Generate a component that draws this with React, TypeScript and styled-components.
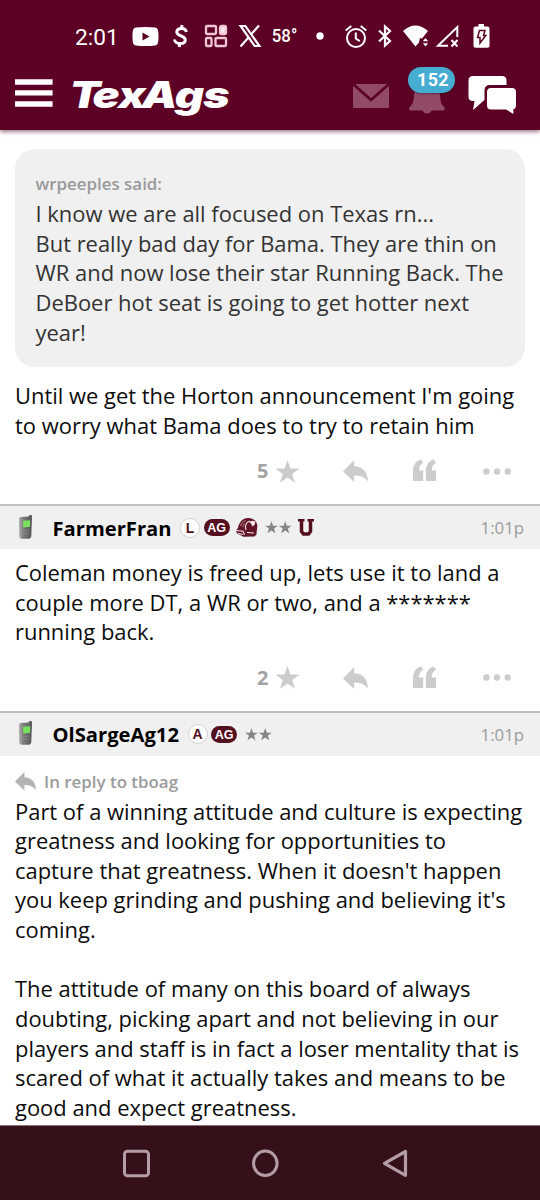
import React from "react";
import styled, { createGlobalStyle } from "styled-components";

const GlobalStyle = createGlobalStyle`
  * { box-sizing: border-box; }
  body { margin: 0; background: #fff; }
`;

const Screen = styled.div`
  display: flex;
  flex-direction: column;
  width: 540px;
  height: 1200px;
  overflow: hidden;
  background: #fff;
  color: #0c0c0c;
  font-family: "Open Sans", sans-serif;
`;

const TopBar = styled.header`
  flex: 0 0 130px;
  height: 130px;
  z-index: 1;
  background: #5c0025;
  color: #fff;
  box-shadow: 0 2px 4px rgba(70, 0, 30, 0.5);
`;

const StatusBar = styled.div`
  display: flex;
  align-items: center;
  height: 64px;
  padding: 8px 0 0 75px;
  font-family: Roboto, sans-serif;
`;

const Clock = styled.span`
  width: 57px;
  padding-top: 3px;
  font-size: 22.7px;
  line-height: 28px;
`;

const Icon = styled.svg<{ $ml?: number }>`
  display: block;
  flex: none;
  overflow: visible;
  margin-left: ${(p) => p.$ml ?? 0}px;
`;

const AppBar = styled.div`
  display: flex;
  align-items: flex-start;
  height: 66px;
  padding: 11px 0 0 15px;
`;

const BellWrap = styled.div`
  position: relative;
  margin: 5px 0 0 20px;
`;

const Count = styled.span`
  position: absolute;
  left: -1px;
  top: -13px;
  width: 47px;
  height: 26px;
  border-radius: 13px;
  background: #46acd2;
  box-shadow: 0 1px 2px rgba(30, 0, 20, 0.4);
  padding-left: 3px;
  color: #fff;
  font: 700 18px/26px Roboto, sans-serif;
  letter-spacing: 0.3px;
  text-align: center;
`;

const Feed = styled.main`
  flex: 1;
  min-height: 0;
  overflow: hidden;
`;

const Quote = styled.blockquote`
  margin: 19px 15px 14px;
  height: 218px;
  padding: 20px 20px 0 20.5px;
  border-radius: 20px;
  background: #f0f0f0;
  color: #333;
`;

const QuoteAuthor = styled.div`
  color: #999;
  font-size: 16.9px;
  font-weight: 600;
  line-height: 29px;
  padding-bottom: 1px;
`;

const Text = styled.p<{ $indent?: number }>`
  margin: 0;
  padding-left: ${(p) => p.$indent ?? 0}px;
  font-size: 21.94px;
  line-height: 29.65px;
  white-space: nowrap;
`;

const Line = styled.span`
  display: block;
  min-height: 29.65px;
`;

const Post = styled.article<{ $h?: number }>`
  display: flex;
  flex-direction: column;
  height: ${(p) => (p.$h ? `${p.$h}px` : "auto")};
`;

const Actions = styled.div`
  display: flex;
  align-items: center;
  height: 24px;
  margin-top: auto;
  margin-bottom: 21px;
  padding-left: 257px;
  color: #ccc;
`;

const Votes = styled.span`
  width: 18px;
  color: #a3a3a3;
  font-size: 20px;
  font-weight: 700;
  line-height: 24px;
`;

const PostHeader = styled.div`
  display: flex;
  flex: none;
  align-items: center;
  height: 45px;
  margin-bottom: 9px;
  padding: 0 16px 0 18px;
  border-top: 2px solid #c0c0c0;
  background: #f0f0f0;
`;

const Name = styled.span<{ $w: number }>`
  width: ${(p) => p.$w}px;
  margin-left: 18.5px;
  color: #000;
  font-size: 20.2px;
  font-weight: 700;
  white-space: nowrap;
`;

const LetterBadge = styled.span`
  width: 20px;
  height: 20px;
  border: 1px solid #d2d2d2;
  border-radius: 50%;
  background: #fff;
  color: #501020;
  font: 700 14px/19px "Liberation Sans", sans-serif;
  text-align: center;
`;

const AgBadge = styled.span`
  width: 26px;
  height: 17px;
  margin-left: 3.5px;
  border-radius: 9px;
  background: #54101f;
  color: #fff;
  font: 700 12.5px/18px "Liberation Sans", sans-serif;
  text-align: center;
`;

const Time = styled.time`
  margin-left: auto;
  color: #9b9b9b;
  font-size: 16.8px;
`;

const ReplyTo = styled.div`
  display: flex;
  align-items: center;
  height: 26px;
  margin: 4px 0 2px;
  padding-left: 15px;
  color: #9b9b9b;
  font-size: 16.9px;
  font-weight: 600;
  gap: 8px;
`;

const NavBar = styled.nav`
  display: flex;
  flex: 0 0 75px;
  height: 75px;
  padding: 24px 0 0 123px;
  border-top: 1px solid #8a7276;
  background: #361018;
`;

const Reply = ({ w, ml, color = "#ccc" }: { w: number; ml?: number; color?: string }) => (
  <Icon $ml={ml} width={w} height={(w * 22) / 25} viewBox="0 0 25 22">
    <path fill={color} d="M0 11.4L11.2 0v6.2C19.4 6.4 24.6 11.6 25 21.3 21.4 17.1 17 15.4 11.2 15.6V22z" />
  </Icon>
);

const STAR = "M12 0l2.9 8.6H24l-7.3 5.4 2.8 8.7L12 17.4l-7.5 5.3L7.3 14 0 8.6h9.1z";

const ActionRow = ({ votes }: { votes: number }) => (
  <Actions>
    <Votes>{votes}</Votes>
    <Icon width="25" height="23" viewBox="0 0 24 23"><path fill="currentColor" d={STAR} /></Icon>
    <Reply w={25} ml={43} />
    <Icon $ml={45} width="23" height="22" viewBox="0 0 23 22">
      <path
        fill="currentColor"
        d="M0 21V11.500C0 5 3 .7 8.200-.5l1.900 3.600C7.400 4.200 6.100 6.500 6 10.500h4.200V21zM12.800 21V11.500C12.800 5 15.800.7 21-.5l1.900 3.600c-2.700 1.100-4 3.400-4.100 7.400H23V21z"
      />
    </Icon>
    <Icon $ml={46.5} width="28" height="7" viewBox="0 0 28 7" fill="currentColor">
      <circle cx="3.4" cy="3.5" r="3.2" /><circle cx="14" cy="3.5" r="3.2" /><circle cx="24.7" cy="3.5" r="3.2" />
    </Icon>
  </Actions>
);

const Phone = () => (
  <Icon width="16" height="26" viewBox="0 0 16 26">
    <defs>
      <linearGradient id="phone" x1="0" x2="1" y1="0" y2="0">
        <stop offset="0" stopColor="#b0b0b0" /><stop offset=".35" stopColor="#7c7c7c" /><stop offset="1" stopColor="#565656" />
      </linearGradient>
    </defs>
    <path fill="url(#phone)" d="M2.5 2L10.500 1.500 11.500 0h2.200l.3 2-.7 19c0 1.600-1 2.500-2.500 2.700l-6 .1C2.800 23.800 1.200 23 1.200 21L1 4.500C1 3 1.500 2 2.500 2z" />
    <path fill="#79e25c" d="M5 5.800l7-.6v6.500l-6.700.8z" />
    <path stroke="#8f8f8f" strokeWidth="1" strokeDasharray="1.500 1.300" d="M5 15.500h6M5 18.500h6" />
  </Icon>
);

const Stars = ({ ml }: { ml: number }) => (
  <Icon $ml={ml} width="27" height="13" viewBox="0 0 54 26" fill="#858585">
    <path transform="scale(1.080)" d={STAR} /><path transform="translate(27.500) scale(1.080)" d={STAR} />
  </Icon>
);

const Helmet = () => (
  <Icon $ml={6} width="22" height="19" viewBox="0 0 22 19">
    <path fill="#611425" d="M2 10C3 4 7 0 12 0c5.500 0 9.300 3.500 9.300 8 0 3-.8 5-.8 8.500l-2 2-11 .2L1 15.500l-1-3z" />
    <path fill="none" stroke="#f5e9ec" strokeWidth="1.100" d="M0 12.500l7 .8 1.500 3.500M11 14.500l7 .5M2 15.500l5 1M10 12c-1.500-4 0-8 4-9" />
    <path fill="none" stroke="#c597a3" strokeWidth=".9" d="M4.500 8c1-3 2.500-4.500 5-5.500M7 9c.5-2 1-3 2-4" />
    <path fill="#f5e9ec" d="M13 4l3-1.200 3.500.7-1 3.500-2.500 1.500-.5-2.500z" />
  </Icon>
);

const BlockU = () => (
  <Icon $ml={6} width="16" height="17" viewBox="0 0 16 17">
    <path fill="none" stroke="#54101f" strokeWidth="3.500" d="M3.500 1v11.500l2 2.500h5l2-2.500V1" />
    <path stroke="#54101f" strokeWidth="2.500" d="M0 1.300h6.500M9.500 1.300H16" />
  </Icon>
);

const StatusIcons = () => (
  <>
    <Icon width="27" height="19" viewBox="0 0 27 19">
      <path fill="#fff" fillRule="evenodd" d="M4 .5Q13.500-.5 23 .5c2.700.3 3.500 2 3.500 9s-.8 8.700-3.500 9q-9.500 1-19 0C1.300 18.200.5 16.500.5 9.500S1.300.8 4 .5zM10.500 5.500v8l7-4z" />
    </Icon>
    <Icon $ml={13.5} width="15" height="22" viewBox="0 0 15 22" fill="none" stroke="#fff">
      <path strokeWidth="3" d="M13.300 7C13 4.500 11 3.500 8.500 3.500 5.500 3.500 3.800 5 3.800 7c0 4.800 8.500 3 8.500 8 0 2.200-2 3.500-5 3.500S1.700 17 1.500 14.500" />
      <path strokeWidth="3" d="M9 0l-.6 4M6.800 18l-.6 4" />
    </Icon>
    <Icon $ml={17} width="22" height="22" viewBox="0 0 22 22" fill="none" stroke="#f3c6d4" strokeWidth="2.300">
      <rect x="1" y="1" width="10" height="8" rx="1" /><rect x="15" y="1" width="6" height="8" rx="1.500" fill="#ffe8ef" />
      <rect x="1" y="13" width="5.500" height="8" rx="1" /><rect x="10.500" y="13" width="10.500" height="8" rx="1" />
    </Icon>
    <Icon $ml={12.5} width="22" height="22" viewBox="0 0 22 22" fill="none" stroke="#fff" strokeWidth="2.200">
      <path d="M1.600 1h4.800l14 20h-4.800zM20 .5l-8.300 9.300M9.700 12.200L1.500 21.500" />
    </Icon>
    <Icon $ml={11} width="24" height="22" viewBox="0 0 24 22">
      <text x="-.2" y="17" fill="#fff" fontFamily="Roboto, sans-serif" fontWeight="500" fontSize="19" textLength="25.500" lengthAdjust="spacingAndGlyphs">58°</text>
    </Icon>
    <Icon $ml={20} width="8" height="8" viewBox="0 0 8 8"><circle cx="4" cy="4" r="3.700" fill="#fff" /></Icon>
    <Icon $ml={21} width="22" height="23" viewBox="0 0 22 23" fill="none" stroke="#fff" strokeWidth="2">
      <circle cx="11" cy="13" r="9" /><path d="M.7 5.500L6.300.9M21.300 5.500L15.700.9M10.800 7.500v6l4 2.700" />
    </Icon>
    <Icon $ml={11} width="14" height="22" viewBox="0 0 14 22" fill="none" stroke="#fff" strokeWidth="2.200">
      <path d="M1 5.500l11 10.500-5 4.500v-19l5 4.500L1 16.500" />
    </Icon>
    <Icon $ml={11} width="26" height="22" viewBox="0 0 26 22" fill="#fff">
      <path d="M0 6C7.500-1.500 17.500-1.500 25 6l-6 7.500-2-.5-1 4.500-3.500 4z" />
      <path d="M19.800 16.300l2.700-3.300 2.700 3.300zM19.800 18.300l2.700 3.300 2.700-3.300z" />
    </Icon>
    <Icon $ml={6.500} width="23" height="22" viewBox="0 0 23 22" fill="none" stroke="#fff" strokeWidth="2">
      <path d="M12 20.800H2L21.300 2v10M15.500 15l6 6.500M21.500 15l-6 6.500" />
    </Icon>
    <Icon $ml={14.500} width="17" height="24" viewBox="0 0 17 24">
      <path fill="#fff" d="M5.500 0h5.500v2.500h3.500q2 0 2 2V22q0 1.800-2 1.800h-12q-2 0-2-1.800V4.500q0-2 2-2h3z" />
      <path fill="none" stroke="#5c0025" strokeWidth="1.500" d="M6.500 6.500h5.500l-1.500 5h2.300L7 19v-5.500H4.500z" />
    </Icon>
  </>
);

const Logo = () => (
  <Icon $ml={20} width="156" height="42" viewBox="0 0 156 42">
    <text
      transform="translate(-3.500 32.500) scale(1.235 1)"
      dx="0 -3.500 -.5 -3.500 -.5 -.5"
      fill="#fff"
      fontFamily="Inter, sans-serif"
      fontStyle="italic"
      fontWeight="900"
      fontSize="36.500"
    >
      TexAgs
    </text>
  </Icon>
);

export default function App() {
  return (
    <Screen>
      <GlobalStyle />
      <TopBar>
        <StatusBar>
          <Clock>2:01</Clock>
          <StatusIcons />
        </StatusBar>
        <AppBar>
          <Icon width="38" height="40" viewBox="0 0 38 40" fill="#fff">
            <path d="M0 4.300h37.600v5.400H0zM0 15.200h37.600v5.400H0zM0 26.300h37.600v5.400H0z" />
          </Icon>
          <Logo />
          <Icon $ml={124} width="36" height="40" viewBox="0 0 36 40">
            <rect y="9" width="36" height="24" rx="1.500" fill="#914b69" />
            <path d="M0 9l18 16L36 9" fill="none" stroke="#5c0025" strokeWidth="2.800" />
          </Icon>
          <BellWrap>
            <Icon width="36" height="34" viewBox="0 0 36 34" fill="#914b69">
              <path d="M18 0c3 0 4 2 4 3.500 6 2 8.500 7 9 12 .5 6 1 9 4.300 11.500q1.200 3-1.300 3.500H22.500C21 34.500 15 34.500 13.500 30.500H1.500Q-.8 30 .5 27C4 24.500 4.500 21.500 5 15.500c.5-5 3-10 9-12C14 2 15 0 18 0z" />
            </Icon>
            <Count>152</Count>
          </BellWrap>
          <Icon $ml={23} width="48" height="40" viewBox="0 0 48 40" fill="#fff">
            <path d="M5 1h29q4.500 0 4.500 4.500V10H22q-5.500 0-5.500 5.500V25L5 35l1.500-9H5Q.5 26 .5 21.500v-16Q.5 1 5 1z" />
            <path d="M23 13h21q4 0 4 4v13q0 4-2.800 4.300L45.500 39l-7.500-4.600H23q-4 0-4-4V17q0-4 4-4z" />
          </Icon>
        </AppBar>
      </TopBar>

      <Feed>
        <Post $h={374}>
          <Quote>
            <QuoteAuthor>wrpeeples said:</QuoteAuthor>
            <Text>
              <Line>I know we are all focused on Texas rn...</Line>
              <Line>But really bad day for Bama. They are thin on</Line>
              <Line>WR and now lose their star Running Back. The</Line>
              <Line>DeBoer hot seat is going to get hotter next</Line>
              <Line>year!</Line>
            </Text>
          </Quote>
          <Text $indent={15}>
            <Line>Until we get the Horton announcement I'm going</Line>
            <Line>to worry what Bama does to try to retain him</Line>
          </Text>
          <ActionRow votes={5} />
        </Post>

        <Post $h={206.5}>
          <PostHeader>
            <Phone />
            <Name $w={127.5}>FarmerFran</Name>
            <LetterBadge>L</LetterBadge>
            <AgBadge>AG</AgBadge>
            <Helmet />
            <Stars ml={7} />
            <BlockU />
            <Time>1:01p</Time>
          </PostHeader>
          <Text $indent={15}>
            <Line>Coleman money is freed up, lets use it to land a</Line>
            <Line>couple more DT, a WR or two, and a *******</Line>
            <Line>running back.</Line>
          </Text>
          <ActionRow votes={2} />
        </Post>

        <Post>
          <PostHeader>
            <Phone />
            <Name $w={135}>OlSargeAg12</Name>
            <LetterBadge>A</LetterBadge>
            <AgBadge>AG</AgBadge>
            <Stars ml={8} />
            <Time>1:01p</Time>
          </PostHeader>
          <ReplyTo>
            <Reply w={21} color="#b4b4b4" />
            In reply to tboag
          </ReplyTo>
          <Text $indent={15}>
            <Line>Part of a winning attitude and culture is expecting</Line>
            <Line>greatness and looking for opportunities to</Line>
            <Line>capture that greatness. When it doesn't happen</Line>
            <Line>you keep grinding and pushing and believing it's</Line>
            <Line>coming.</Line>
            <Line />
            <Line>The attitude of many on this board of always</Line>
            <Line>doubting, picking apart and not believing in our</Line>
            <Line>players and staff is in fact a loser mentality that is</Line>
            <Line>scared of what it actually takes and means to be</Line>
            <Line>good and expect greatness.</Line>
          </Text>
        </Post>
      </Feed>

      <NavBar>
        <Icon width="27" height="28" viewBox="0 0 27 28" fill="none" stroke="#b39da2" strokeWidth="3">
          <rect x="1.500" y="1.200" width="24" height="24.500" rx="3" />
        </Icon>
        <Icon $ml={102} width="27" height="28" viewBox="0 0 27 28" fill="none" stroke="#b39da2" strokeWidth="3">
          <ellipse cx="13.300" cy="13.300" rx="11.800" ry="12.200" />
        </Icon>
        <Icon $ml={103} width="26" height="28" viewBox="0 0 26 28" fill="none" stroke="#b39da2" strokeWidth="3.200" strokeLinejoin="round">
          <path d="M2.500 13.300L23.500 1.500v23.800z" />
        </Icon>
      </NavBar>
    </Screen>
  );
}
